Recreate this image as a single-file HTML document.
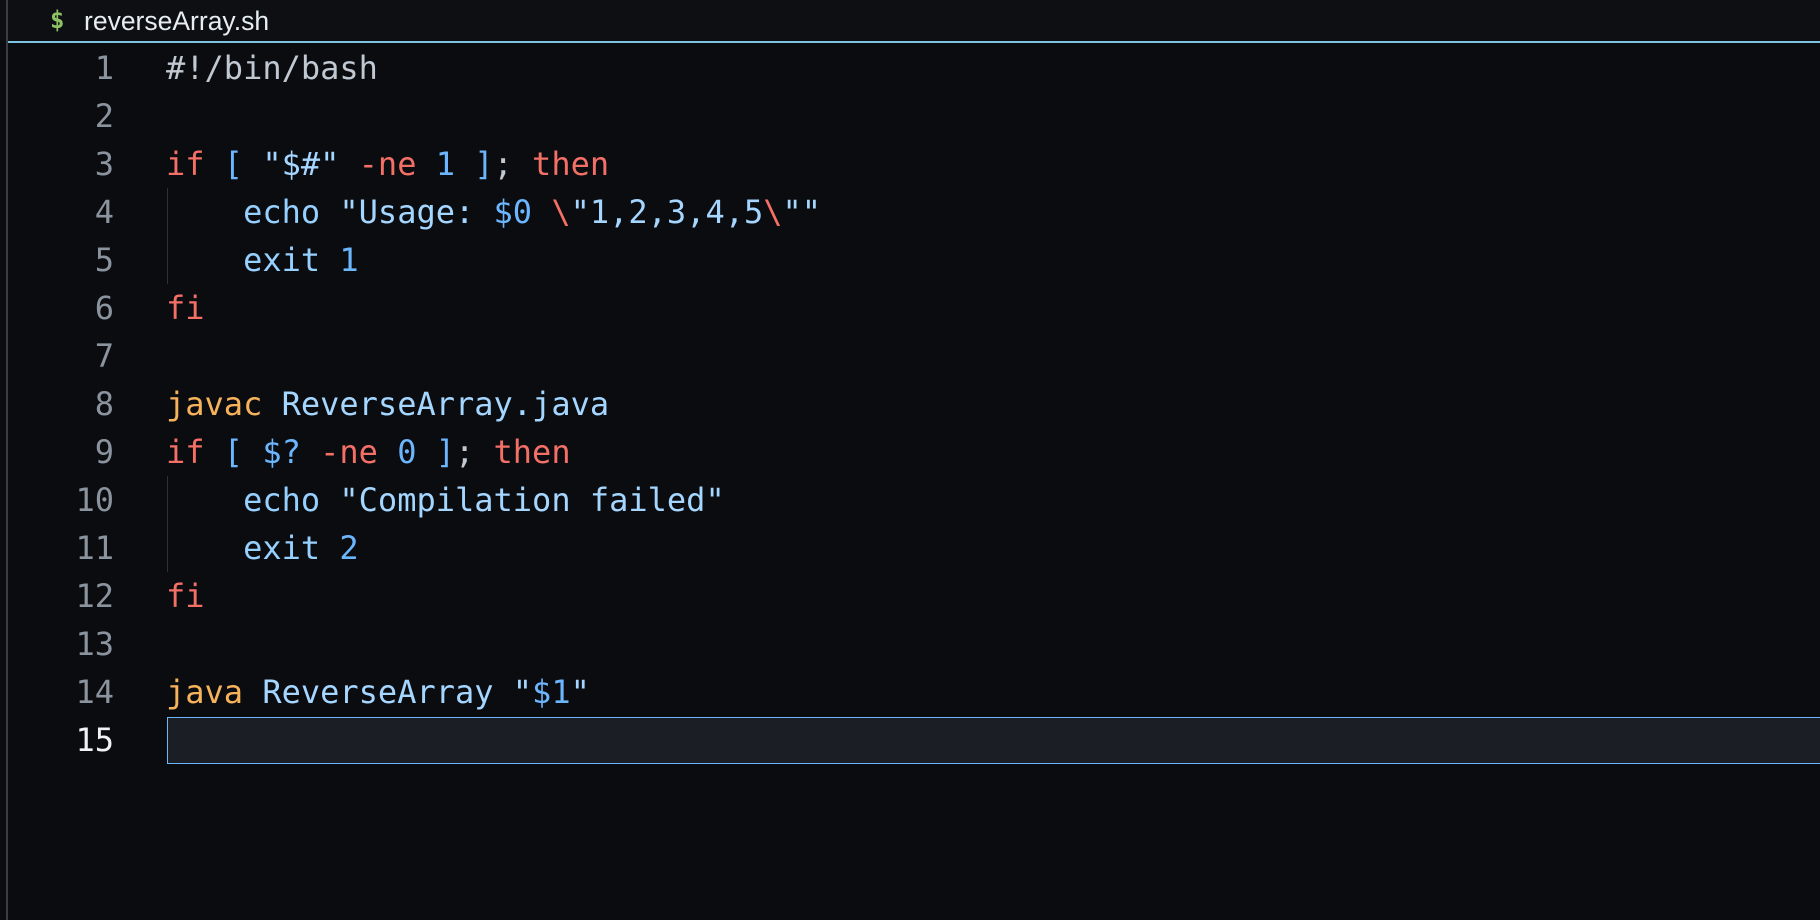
<!DOCTYPE html>
<html><head><style>
html,body{margin:0;padding:0;width:1820px;height:920px;background:#0b0c10;overflow:hidden}
.lb{position:absolute;left:6px;top:0;width:2px;height:920px;background:#3a3d44}
.tab{position:absolute;left:0;top:0;width:1820px;height:42px;background:#0d0f13}
.tab .d{position:absolute;left:50px;top:6px;font:bold 24px "DejaVu Sans Mono",monospace;color:#8cc265}
.tab .t{position:absolute;left:84px;top:6px;font:26.5px "Liberation Sans",sans-serif;color:#e6edf3}
.ul{position:absolute;left:8px;top:41px;width:1812px;height:2px;background:#7cc4e0}
.code{position:absolute;left:0;top:44px;font:32px/48px "DejaVu Sans Mono",monospace;color:#c0c8d2}
.row{position:relative;height:48px;white-space:pre}
.n{position:absolute;left:0;width:114px;text-align:right;color:#8b949e}
.c{position:absolute;left:166px}
.k{color:#f47067}.b{color:#96d0ff}.s{color:#a5d6ff}.v{color:#6cb6ff}.o{color:#f6b35c}
.g{position:absolute;left:167px;width:1px;background:#2d3139}
.cur{position:absolute;left:167px;top:717px;width:1660px;height:45px;border:1.5px solid #6cb6ff;background:#1b1e24}
</style></head><body>
<div class="tab"><span class="d">$</span><span class="t">reverseArray.sh</span></div>
<div class="ul"></div>
<div class="lb"></div>
<div class="cur"></div>
<div class="g" style="top:188px;height:96px"></div>
<div class="g" style="top:476px;height:96px"></div>
<div class="code">
<div class="row"><span class="n">1</span><span class="c">#!/bin/bash</span></div>
<div class="row"><span class="n">2</span></div>
<div class="row"><span class="n">3</span><span class="c"><span class="k">if</span> <span class="v">[</span> <span class="s">"$#"</span> <span class="k">-ne</span> <span class="v">1</span> <span class="v">]</span>; <span class="k">then</span></span></div>
<div class="row"><span class="n">4</span><span class="c">    <span class="b">echo</span> <span class="s">"Usage: </span><span class="v">$0</span> <span class="k">\</span><span class="s">"1,2,3,4,5</span><span class="k">\</span><span class="s">""</span></span></div>
<div class="row"><span class="n">5</span><span class="c">    <span class="b">exit</span> <span class="v">1</span></span></div>
<div class="row"><span class="n">6</span><span class="c"><span class="k">fi</span></span></div>
<div class="row"><span class="n">7</span></div>
<div class="row"><span class="n">8</span><span class="c"><span class="o">javac</span> <span class="s">ReverseArray.java</span></span></div>
<div class="row"><span class="n">9</span><span class="c"><span class="k">if</span> <span class="v">[</span> <span class="v">$?</span> <span class="k">-ne</span> <span class="v">0</span> <span class="v">]</span>; <span class="k">then</span></span></div>
<div class="row"><span class="n">10</span><span class="c">    <span class="b">echo</span> <span class="s">"Compilation failed"</span></span></div>
<div class="row"><span class="n">11</span><span class="c">    <span class="b">exit</span> <span class="v">2</span></span></div>
<div class="row"><span class="n">12</span><span class="c"><span class="k">fi</span></span></div>
<div class="row"><span class="n">13</span></div>
<div class="row"><span class="n">14</span><span class="c"><span class="o">java</span> <span class="s">ReverseArray</span> <span class="s">"</span><span class="v">$1</span><span class="s">"</span></span></div>
<div class="row"><span class="n" style="color:#f0f3f6">15</span></div>
</div>
</body></html>
